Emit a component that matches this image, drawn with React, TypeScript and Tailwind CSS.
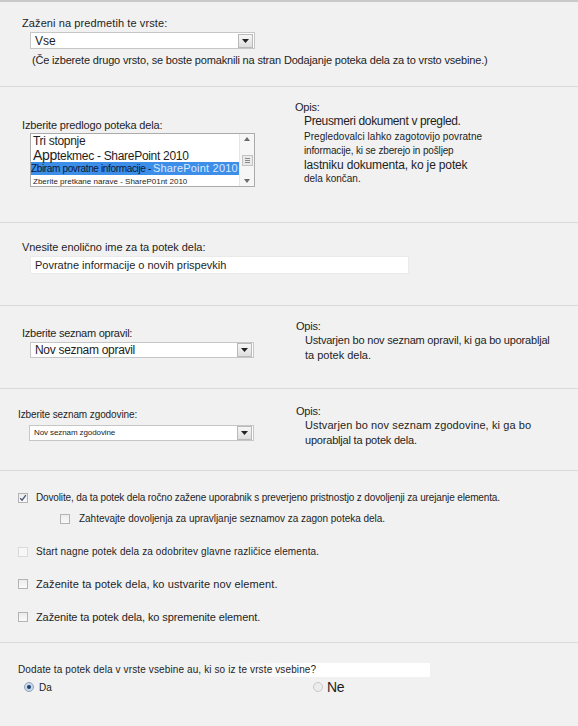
import React from 'react';

// Workflow settings form (SharePoint-style "Dodajanje poteka dela")

const FONT = { fontFamily: '"Liberation Sans", Arial, sans-serif' };

const Arrow: React.FC = () => (
  <svg width="7" height="4" viewBox="0 0 7 4">
    <path d="M0 0h7L3.5 4z" fill="#222" />
  </svg>
);

const Select: React.FC<{ value: string; className: string; textClass: string }> = ({
  value,
  className,
  textClass,
}) => (
  <div className={`flex items-center bg-white border border-[#c6c6c6] ${className}`}>
    <span className={`flex-1 pl-[4px] text-[#1e1e1e] truncate ${textClass}`}>{value}</span>
    <span className="w-[15px] h-[14px] mr-[1px] flex items-center justify-center border border-[#b9b9b9] bg-gradient-to-b from-[#f6f6f6] to-[#dedede]">
      <Arrow />
    </span>
  </div>
);

const Check: React.FC<{ checked?: boolean; faint?: boolean }> = ({ checked, faint }) => (
  <span
    className={`w-[10px] h-[10px] shrink-0 flex items-center justify-center border ${
      faint ? 'border-[#dadada] bg-[#f7f7f7]' : 'border-[#b3b3b3] bg-gradient-to-b from-[#ececec] to-[#fafafa]'
    }`}
  >
    {checked && (
      <svg width="8" height="8" viewBox="0 0 8 8">
        <path d="M1.2 4.2 3.1 6.2 6.8 1.2" fill="none" stroke="#4a5477" strokeWidth="1.3" />
      </svg>
    )}
  </span>
);

const Radio: React.FC<{ on?: boolean }> = ({ on }) => (
  <span
    className={`w-[10px] h-[10px] shrink-0 rounded-full border flex items-center justify-center ${
      on ? 'border-[#8ea3bd] bg-[#c9d8ea]' : 'border-[#c9c9c9] bg-[#ececec]'
    }`}
  >
    {on && <span className="w-[4px] h-[4px] rounded-full bg-[#1d3f6a]" />}
  </span>
);

const Opis: React.FC<{ children: React.ReactNode }> = ({ children }) => (
  <div className="text-[#1e1e1e]">
    <p className="text-[11px] leading-[13px] tracking-[-0.2px]">Opis:</p>
    <div className="pl-[9px]">{children}</div>
  </div>
);

export default function App() {
  return (
    <div style={FONT} className="w-[578px] h-[726px] bg-[#f1f1f1] border-t-2 border-[#c9c9c9] overflow-hidden text-[#1e1e1e]">
      {/* content type */}
      <section className="h-[84px] pt-[14px] pl-[22px]">
        <p className="text-[11px] leading-[14px] tracking-[0.1px]">Zaženi na predmetih te vrste:</p>
        <Select value="Vse" className="ml-[8px] mt-[2px] w-[225px] h-[17px]" textClass="text-[12px]" />
        <p className="ml-[10px] mt-[4px] text-[11px] leading-[14px] tracking-[-0.17px]">
          (Če izberete drugo vrsto, se boste pomaknili na stran Dodajanje poteka dela za to vrsto vsebine.)
        </p>
      </section>

      {/* template */}
      <section className="h-[136px] border-t border-[#dadada] flex">
        <div className="w-[273px] pl-[22px] pt-[31px]">
          <p className="text-[11px] leading-[14px] tracking-[-0.15px]">Izberite predlogo poteka dela:</p>
          <div className="ml-[8px] mt-[1px] w-[225px] h-[54px] bg-white border border-[#ababab] flex">
            <div className="flex-1 pt-[1px] leading-none overflow-hidden">
              <p className="pl-[2px] text-[12px] h-[13px] leading-[13px] tracking-[-0.3px]">Tri stopnje</p>
              <p className="pl-[2px] h-[14px] leading-[14px] tracking-[-0.3px] whitespace-nowrap">
                <span className="text-[14px]">App</span>
                <span className="text-[12px]">tekmec - SharePoint 2010</span>
              </p>
              <div className="flex items-center h-[13px] bg-[#3c8ee8] whitespace-nowrap">
                <span className="shrink-0 pr-[2px] text-[10px] leading-[12px] text-[#0b1a3a] tracking-[-0.35px]">Zbiram povratne informacije -</span>
                <span className="shrink-0 text-[11px] leading-[13px] text-[#dbe9ff] tracking-[0.2px]">SharePoint 2010</span>
              </div>
              <p className="pl-[2px] pt-[2px] text-[8px] leading-[10px] whitespace-nowrap">
                Zberite pretkane narave - ShareP01nt 2010
              </p>
            </div>
            <div className="w-[15px] border-l border-[#e6e6e6] bg-[#f6f6f6] flex flex-col items-center justify-between py-[3px]">
              <svg width="6" height="4" viewBox="0 0 6 4">
                <path d="M0 4h6L3 0z" fill="#6b6b6b" />
              </svg>
              <span className="w-[11px] h-[11px] border border-[#c3c3c3] bg-[#e9e9e9] flex flex-col items-center justify-center gap-[1px]">
                <span className="w-[5px] h-px bg-[#8a8a8a]" />
                <span className="w-[5px] h-px bg-[#8a8a8a]" />
                <span className="w-[5px] h-px bg-[#8a8a8a]" />
              </span>
              <svg width="6" height="4" viewBox="0 0 6 4">
                <path d="M0 0h6L3 4z" fill="#6b6b6b" />
              </svg>
            </div>
          </div>
        </div>
        <div className="pl-[22px] pt-[14px]">
          <Opis>
            <p className="text-[12px] leading-[15px] tracking-[-0.35px]">Preusmeri dokument v pregled.</p>
            <p className="text-[10px] leading-[14px] mt-[1px] tracking-[0.05px]">Pregledovalci lahko zagotovijo povratne</p>
            <p className="text-[10px] leading-[14px] tracking-[-0.15px]">informacije, ki se zberejo in pošljep</p>
            <p className="text-[12px] leading-[15px] tracking-[-0.15px]">lastniku dokumenta, ko je potek</p>
            <p className="text-[10px] leading-[12px]">dela končan.</p>
          </Opis>
        </div>
      </section>

      {/* name */}
      <section className="h-[83px] border-t border-[#dadada] pl-[22px] pt-[17px]">
        <p className="text-[11px] leading-[14px] tracking-[-0.05px]">Vnesite enolično ime za ta potek dela:</p>
        <div className="ml-[8px] mt-[2px] w-[379px] h-[18px] bg-white border border-[#eaeaea] pl-[4px] text-[11px] leading-[16px]">
          Povratne informacije o novih prispevkih
        </div>
      </section>

      {/* task list */}
      <section className="h-[83px] border-t border-[#dadada] flex">
        <div className="w-[273px] pl-[22px] pt-[20px]">
          <p className="text-[11px] leading-[14px] tracking-[-0.25px]">Izberite seznam opravil:</p>
          <Select value="Nov seznam opravil" className="ml-[8px] mt-[2px] w-[224px] h-[16px]" textClass="text-[12px] tracking-[-0.3px]" />
        </div>
        <div className="pl-[23px] pt-[14px]">
          <Opis>
            <p className="text-[11px] leading-[15px] tracking-[-0.2px]">Ustvarjen bo nov seznam opravil, ki ga bo uporabljal</p>
            <p className="text-[11px] leading-[15px]">ta potek dela.</p>
          </Opis>
        </div>
      </section>

      {/* history list */}
      <section className="h-[82px] border-t border-[#dadada] flex">
        <div className="w-[273px] pl-[18px] pt-[19px]">
          <p className="text-[10px] leading-[14px] tracking-[-0.1px]">Izberite seznam zgodovine:</p>
          <Select value="Nov seznam zgodovine" className="ml-[11px] mt-[3px] w-[225px] h-[16px]" textClass="text-[8px] tracking-[-0.1px]" />
        </div>
        <div className="pl-[23px] pt-[16px]">
          <Opis>
            <p className="text-[11px] leading-[15px] tracking-[0.1px]">Ustvarjen bo nov seznam zgodovine, ki ga bo</p>
            <p className="text-[11px] leading-[14px] tracking-[-0.2px]">uporabljal ta potek dela.</p>
          </Opis>
        </div>
      </section>

      {/* start options */}
      <section className="h-[172px] border-t border-[#dadada] pl-[18px] pt-[20px] flex flex-col">
        <label className="flex items-center gap-[8px] h-[13px]">
          <Check checked />
          <span className="text-[10px] tracking-[-0.14px]">
            Dovolite, da ta potek dela ročno zažene uporabnik s preverjeno pristnostjo z dovoljenji za urejanje elementa.
          </span>
        </label>
        <label className="flex items-center gap-[9px] h-[13px] ml-[42px] mt-[8px]">
          <Check />
          <span className="text-[10px] tracking-[-0.03px]">Zahtevajte dovoljenja za upravljanje seznamov za zagon poteka dela.</span>
        </label>
        <label className="flex items-center gap-[8px] h-[13px] mt-[20px]">
          <Check faint />
          <span className="text-[10px] tracking-[0.12px]">Start nagne potek dela za odobritev glavne različice elementa.</span>
        </label>
        <label className="flex items-center gap-[8px] h-[14px] mt-[19px]">
          <Check />
          <span className="text-[11px] tracking-[0.1px]">Zaženite ta potek dela, ko ustvarite nov element.</span>
        </label>
        <label className="flex items-center gap-[8px] h-[14px] mt-[19px]">
          <Check />
          <span className="text-[11px] tracking-[-0.1px]">Zaženite ta potek dela, ko spremenite element.</span>
        </label>
      </section>

      {/* content types */}
      <section className="h-[84px] border-t border-[#dadada] pl-[18px] pt-[20px]">
        <p className="w-[412px] text-[10px] leading-[14px] tracking-[0.12px] bg-gradient-to-r from-[#f1f1f1] from-50% to-white to-70%">
          Dodate ta potek dela v vrste vsebine au, ki so iz te vrste vsebine?
        </p>
        <div className="flex items-center mt-[3px] ml-[6px] h-[14px]">
          <label className="w-[289px] flex items-center gap-[5px]">
            <Radio on />
            <span className="text-[10px]">Da</span>
          </label>
          <label className="flex items-center gap-[4px]">
            <Radio />
            <span className="text-[14px] tracking-[-0.3px]">Ne</span>
          </label>
        </div>
      </section>
    </div>
  );
}
